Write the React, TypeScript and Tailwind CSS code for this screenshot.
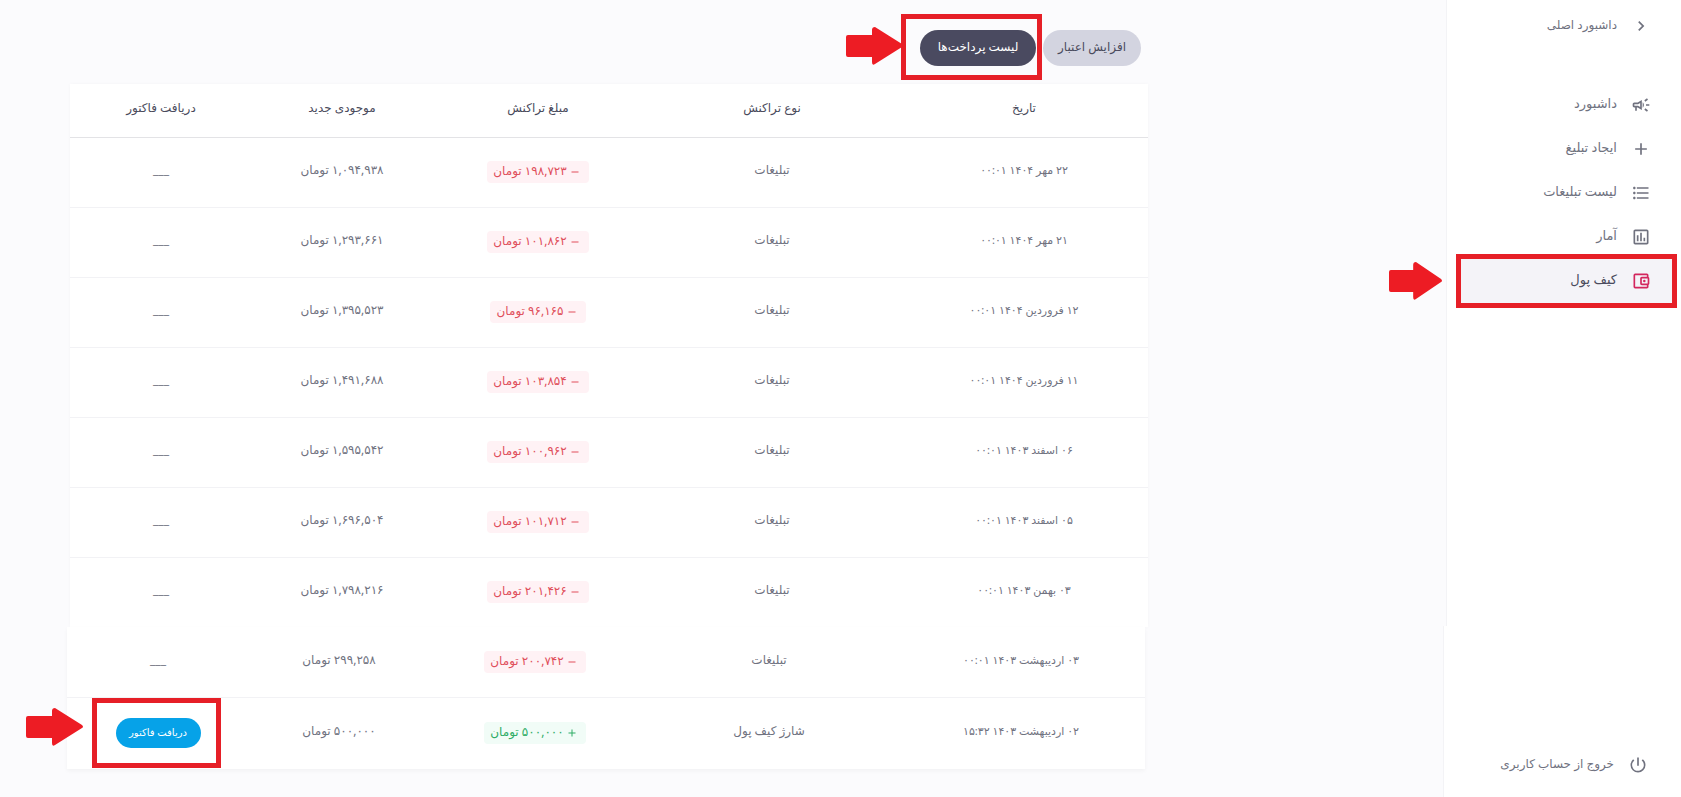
import type { ReactNode } from 'react';
import clsx from 'clsx';
import {
  MdAdd,
  MdChevronRight,
  MdFormatListBulleted,
  MdOutlineAccountBalanceWallet,
  MdOutlineCampaign,
  MdOutlineInsertChart,
  MdPowerSettingsNew,
  MdRemove,
} from 'react-icons/md';

interface Transaction {
  date: string;
  type: string;
  amount: string;
  balance: string;
  credit?: boolean;
}

const recent: Transaction[] = [
  { date: '۲۲ مهر ۱۴۰۴ ۰۰:۰۱', type: 'تبلیغات', amount: '۱۹۸,۷۲۳', balance: '۱,۰۹۴,۹۳۸' },
  { date: '۲۱ مهر ۱۴۰۴ ۰۰:۰۱', type: 'تبلیغات', amount: '۱۰۱,۸۶۲', balance: '۱,۲۹۳,۶۶۱' },
  { date: '۱۲ فروردین ۱۴۰۴ ۰۰:۰۱', type: 'تبلیغات', amount: '۹۶,۱۶۵', balance: '۱,۳۹۵,۵۲۳' },
  { date: '۱۱ فروردین ۱۴۰۴ ۰۰:۰۱', type: 'تبلیغات', amount: '۱۰۳,۸۵۴', balance: '۱,۴۹۱,۶۸۸' },
  { date: '۰۶ اسفند ۱۴۰۳ ۰۰:۰۱', type: 'تبلیغات', amount: '۱۰۰,۹۶۲', balance: '۱,۵۹۵,۵۴۲' },
  { date: '۰۵ اسفند ۱۴۰۳ ۰۰:۰۱', type: 'تبلیغات', amount: '۱۰۱,۷۱۲', balance: '۱,۶۹۶,۵۰۴' },
  { date: '۰۳ بهمن ۱۴۰۳ ۰۰:۰۱', type: 'تبلیغات', amount: '۲۰۱,۴۲۶', balance: '۱,۷۹۸,۲۱۶' },
];

const older: Transaction[] = [
  { date: '۰۳ اردیبهشت ۱۴۰۳ ۰۰:۰۱', type: 'تبلیغات', amount: '۲۰۰,۷۴۲', balance: '۲۹۹,۲۵۸' },
  { date: '۰۲ اردیبهشت ۱۴۰۳ ۱۵:۳۲', type: 'شارژ کیف پول', amount: '۵۰۰,۰۰۰', balance: '۵۰۰,۰۰۰', credit: true },
];

const columns = ['تاریخ', 'نوع تراکنش', 'مبلغ تراکنش', 'موجودی جدید', 'دریافت فاکتور'];

const menu = [
  { label: 'داشبورد', icon: MdOutlineCampaign },
  { label: 'ایجاد تبلیغ', icon: MdAdd },
  { label: 'لیست تبلیغات', icon: MdFormatListBulleted },
  { label: 'آمار', icon: MdOutlineInsertChart },
];

function Arrow({ className }: { className: string }) {
  return (
    <svg
      viewBox="0 0 57 38"
      preserveAspectRatio="none"
      className={clsx('pointer-events-none absolute h-[38px]', className)}
      aria-hidden="true"
    >
      <path
        d="M2 8H26V3Q26 0 29 0L56 17Q58 19 56 20L29 37Q26 39 26 35V30H2Q0 30 0 28V10Q0 8 2 8Z"
        fill="#ed1c24"
      />
    </svg>
  );
}

function Highlight({ className }: { className: string }) {
  return <span className={clsx('pointer-events-none absolute border-5 border-[#e61f27]', className)} />;
}

function Columns() {
  return (
    <colgroup>
      <col className="w-[248px]" />
      <col className="w-[256px]" />
      <col className="w-[212px]" />
      <col className="w-[180px]" />
      <col className="w-[182px]" />
    </colgroup>
  );
}

function Amount({ amount, credit }: { amount: string; credit?: boolean }) {
  const Sign = credit ? MdAdd : MdRemove;
  return (
    <span
      className={clsx(
        'inline-flex h-[22px] items-center gap-0.5 rounded-sm pr-2 pl-1.5',
        credit ? 'bg-[#f1fcf7] text-[#2fac66]' : 'bg-[#fff2f5] text-[#e04f5b]',
      )}
    >
      <Sign className="size-3" />
      <span className="pb-0.5">{amount} تومان</span>
    </span>
  );
}

function Row({ item }: { item: Transaction }) {
  return (
    <tr className={clsx('border-b border-[#f2f2f5] last:border-b-0', item.credit ? 'h-[72px]' : 'h-[70px]')}>
      <td className="pb-1 text-[11px]">{item.date}</td>
      <td className="pb-1">{item.type}</td>
      <td>
        <Amount amount={item.amount} credit={item.credit} />
      </td>
      <td className="pb-1">{item.balance} تومان</td>
      {item.credit ? (
        <td>
          <span className="relative inline-block align-middle">
            <button className="h-[30px] w-[85px] rounded-full bg-[#06a2e8] pb-0.5 text-[10px] font-medium text-white">
              دریافت فاکتور
            </button>
            <Highlight className="-inset-y-5 -right-5 -left-6" />
            <Arrow className="-top-[10px] -left-[90px] w-[57px]" />
          </span>
        </td>
      ) : (
        <td className="pb-1">___</td>
      )}
    </tr>
  );
}

function MenuItem({ icon, className, children }: { icon: ReactNode; className?: string; children: ReactNode }) {
  return (
    <a href="#" className={clsx('flex h-11 items-center gap-3.5', className)}>
      {icon}
      <span className="pb-0.5">{children}</span>
    </a>
  );
}

export default function App() {
  return (
    <div
      dir="rtl"
      className="flex min-h-screen bg-[#fbfbfd] font-['Noto_Sans','DejaVu_Sans',sans-serif] text-[#70727f]"
    >
      <aside className="flex w-[238px] shrink-0 flex-col">
        <nav className="min-h-[626px] w-[235px] border-l border-[#f3f3f6] bg-white pt-1 text-[13px]">
          <MenuItem icon={<MdChevronRight className="size-5" />} className="pr-[30px] text-[12px]">
            داشبورد اصلی
          </MenuItem>
          <div className="mt-[35px]">
            {menu.map(({ label, icon: Icon }) => (
              <MenuItem key={label} icon={<Icon className="size-5" />} className="pr-[30px]">
                {label}
              </MenuItem>
            ))}
          </div>
          <div className="relative mr-1 ml-[9px] bg-[#f4f3f8] text-[#4a4b5c]">
            <MenuItem
              icon={<MdOutlineAccountBalanceWallet className="size-5 text-[#d3265e]" />}
              className="pr-[26px]"
            >
              کیف پول
            </MenuItem>
            <Highlight className="inset-x-0 -inset-y-[5px]" />
            <Arrow className="top-[3px] -left-[67px] w-[53px]" />
          </div>
        </nav>
        <div className="flex grow flex-col justify-end border-l border-[#f3f3f6] bg-white pb-[10px] text-[12px]">
          <MenuItem icon={<MdPowerSettingsNew className="size-5" />} className="pr-[33px]">
            خروج از حساب کاربری
          </MenuItem>
        </div>
      </aside>

      <main className="grow pt-[30px] pr-[295px] pl-[67px]">
        <div className="flex gap-[7px] pr-[7px] text-[12px]">
          <button className="h-9 w-[98px] rounded-full bg-[#d3d4e0] pb-0.5 text-[#4a4b5c]">افزایش اعتبار</button>
          <div className="relative">
            <button className="h-9 w-[116px] rounded-full bg-[#4a4a60] pb-0.5 text-white">لیست پرداخت‌ها</button>
            <Highlight className="-top-4 -right-1.5 -bottom-3.5 -left-[19px]" />
            <Arrow className="-top-[3px] -left-[74px] w-[57px]" />
          </div>
        </div>

        <div className="mt-[18px] text-center text-[12px]">
          <div className="pl-[3px]">
            <table className="w-full table-fixed bg-white shadow-[0_0_4px_#00000008]">
              <Columns />
              <thead>
                <tr className="h-[53px] border-b border-[#e3e3e6] text-[#4a4b5c]">
                  {columns.map((name) => (
                    <th key={name} scope="col" className="pb-1 font-normal">
                      {name}
                    </th>
                  ))}
                </tr>
              </thead>
              <tbody>
                {recent.map((item) => (
                  <Row key={item.date} item={item} />
                ))}
              </tbody>
            </table>
          </div>
          <div className="pr-[3px]">
            <table className="w-full table-fixed bg-white shadow-[0_2px_4px_#0000000a]">
              <Columns />
              <tbody>
                {older.map((item) => (
                  <Row key={item.date} item={item} />
                ))}
              </tbody>
            </table>
          </div>
        </div>
      </main>
    </div>
  );
}
